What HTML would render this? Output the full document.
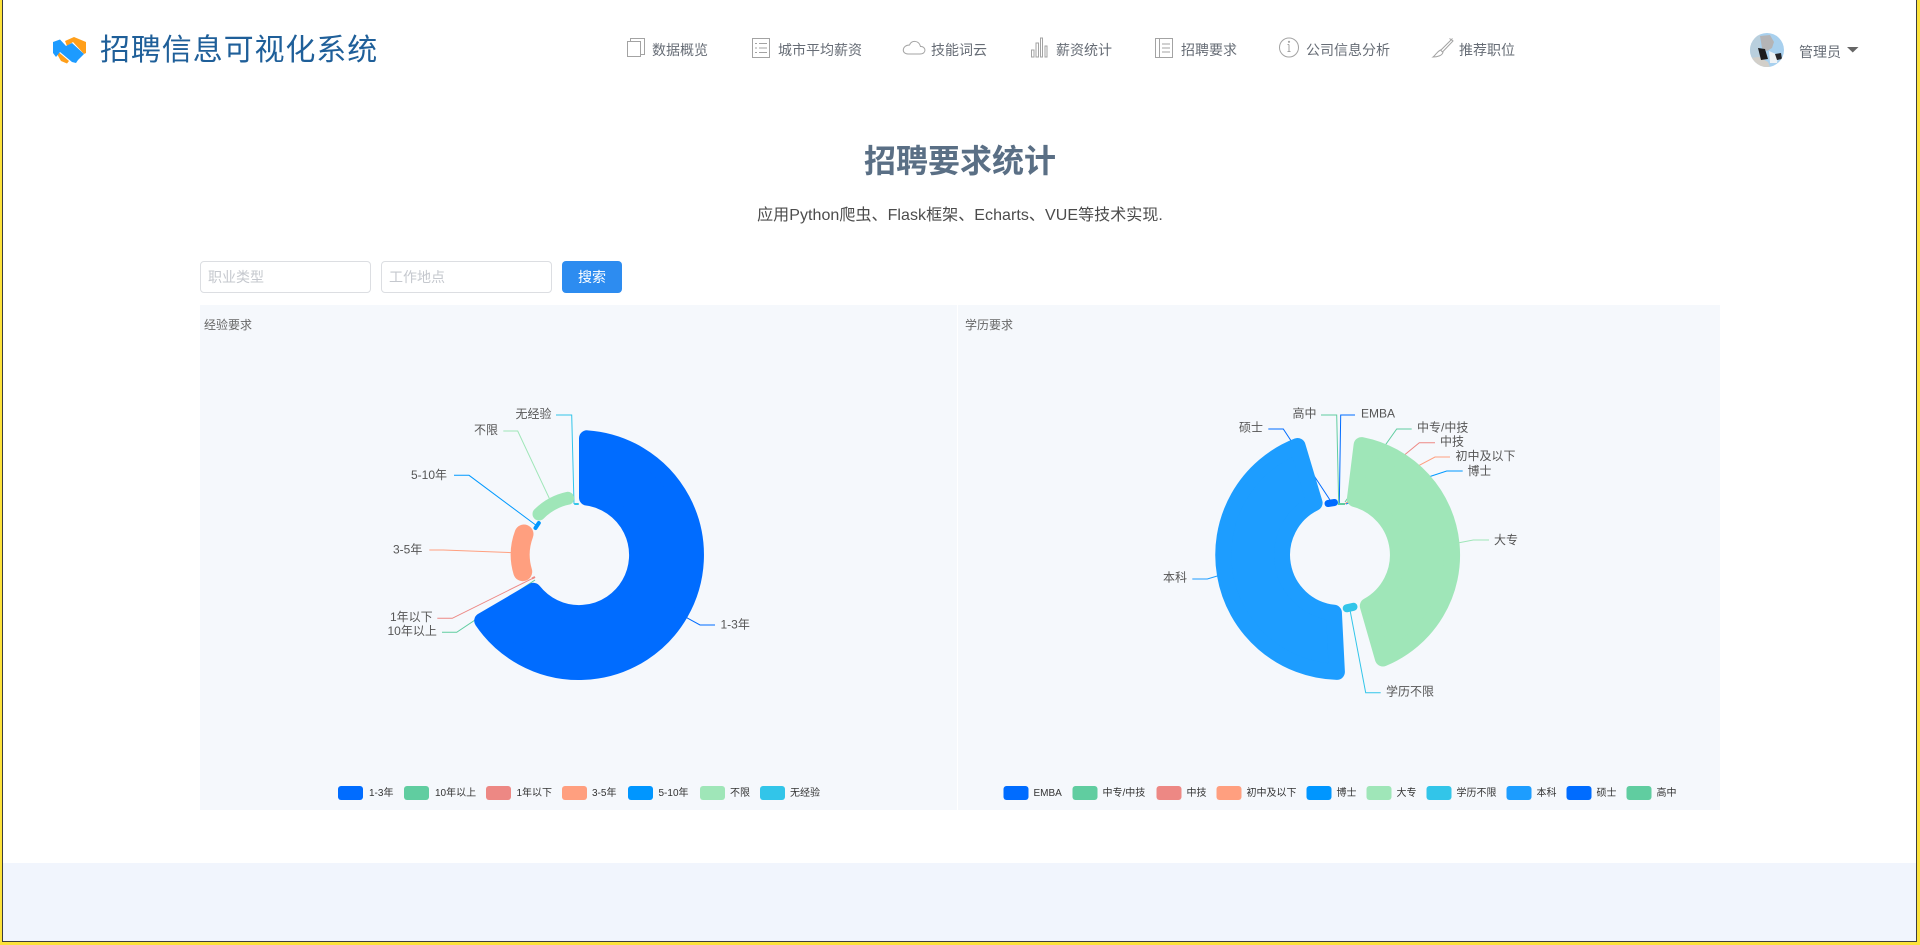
<!DOCTYPE html>
<html lang="zh"><head><meta charset="utf-8"><title>招聘要求统计</title>
<style>
html,body{margin:0;padding:0;background:#fff;width:1920px;height:945px;overflow:hidden}
body{position:relative;font-family:"Liberation Sans","Noto Sans CJK SC",sans-serif;color:#515a6e}
.a{position:absolute;white-space:nowrap}
.nav{font-size:14px;line-height:20px;top:40px;color:#666c75}
.in{box-sizing:border-box;top:261px;width:171px;height:32px;border:1px solid #dcdee2;border-radius:4px;background:#fff;color:#c5c8ce;font-size:14px;line-height:30px;padding-left:7px}
svg{position:absolute;overflow:visible}
svg text{font-family:"Liberation Sans","Noto Sans CJK SC",sans-serif;dominant-baseline:central}
.lb text{font-size:12px;fill:#555}
.lg text{font-size:10px;fill:#333}
.ic{fill:none;stroke:#a3a3a3;stroke-width:1}
</style></head><body>

<div class="a" style="left:0;top:863px;width:1920px;height:82px;background:#f1f5fd"></div>
<div class="a" style="left:200px;top:305px;width:757px;height:505px;background:#f5f8fc"></div>
<div class="a" style="left:958px;top:305px;width:762px;height:505px;background:#f5f8fc"></div>

<!-- logo -->
<svg style="left:0;top:0" width="100" height="70">
<polygon fill="#ff9f1a" points="65,41 74,37 86,42 86,53 84,54 73,42 67,46"/>
<polygon fill="#ff9f1a" points="57,54 59,52.5 69,61 67,63.5 61,61"/>
<polygon fill="#1d9bff" points="53,42 60,39.5 66,46 72,43 84,54 78,60 76,63 72,62 60,52 56,57 53,53"/>
</svg>
<div class="a" style="left:100px;top:30px;font-size:30px;line-height:42px;color:#1f5f99;letter-spacing:.9px">招聘信息可视化系统</div>

<!-- nav icons -->
<svg style="left:0;top:0" width="1920" height="70">
<g class="ic">
<rect x="627.5" y="41.5" width="13" height="15"/><path d="M630.5 41V38.5H644.5V54.5H641"/>
<rect x="752.5" y="38.5" width="17" height="19"/><path d="M755 43.5h2M759 43.5h8M755 48h2M759 48h8M755 52.5h2M759 52.5h8"/>
<path d="M908 54H920C927 54 926 46 920.5 46.5C919 40 911 40 909.5 45C902 45 901 54 908 54Z"/>
<path d="M1031.500 57V50H1034V57ZM1036 57V43H1038.500V57ZM1040.500 57V38H1042.500V57ZM1045 57V46H1047V57Z"/>
<rect x="1155.500" y="38.500" width="17" height="19"/><path d="M1159.500 38.500V57.500M1162 44h8M1162 48h8M1162 52h8"/>
<circle cx="1289" cy="47.500" r="9.500"/><path d="M1289 44.500v7M1287.500 44.500h1.500M1287.500 51.500h3"/><circle cx="1289" cy="41.800" r=".6"/>
<path d="M1452.500 38.500L1440.500 50.500M1449.500 38.500L1453 41L1442.500 52M1440.500 50L1443 52.500C1442 55.500 1437.500 57 1433 57C1436 55 1436.500 52 1440.500 50Z"/>
</g>
<path d="M1847 47H1858.500L1852.750 52.500Z" fill="#666"/>
</svg>

<div class="a nav" style="left:652px">数据概览</div>
<div class="a nav" style="left:778px">城市平均薪资</div>
<div class="a nav" style="left:931px">技能词云</div>
<div class="a nav" style="left:1056px">薪资统计</div>
<div class="a nav" style="left:1181px">招聘要求</div>
<div class="a nav" style="left:1306px">公司信息分析</div>
<div class="a nav" style="left:1459px">推荐职位</div>
<div class="a nav" style="left:1799px;top:42px">管理员</div>

<!-- avatar -->
<svg style="left:1750px;top:33px" width="34" height="34" viewBox="0 0 34 34">
<defs><clipPath id="cp"><circle cx="17" cy="17" r="17"/></clipPath></defs>
<g clip-path="url(#cp)">
<rect width="34" height="34" fill="#a8d0ee"/>
<rect x="0" y="0" width="10" height="26" fill="#b9cfdd"/>
<path d="M10 3L20 2L24 9L22 15L17 18L12 15Z" fill="#b4b4b6"/>
<path d="M0 25L9 24L18 29L20 34H0Z" fill="#d2cfc9"/>
<path d="M19 18L28 22L27 30L20 30Z" fill="#eef2f5"/>
<path d="M8 15L15 16L18 26L11 27Z" fill="#1c1c1e"/>
<path d="M25 21L31 20L32 26L27 27Z" fill="#26262a"/>
</g></svg>

<!-- heading -->
<div class="a" style="left:0;width:1920px;top:139px;text-align:center;font-size:32px;line-height:44px;font-weight:700;color:#5a6f85">招聘要求统计</div>
<div class="a" style="left:0;width:1920px;top:204px;text-align:center;font-size:16px;line-height:24px;color:#4c4c4c;letter-spacing:.06px">应用Python爬虫、Flask框架、Echarts、VUE等技术实现.</div>

<!-- search -->
<div class="a in" style="left:200px">职业类型</div>
<div class="a in" style="left:381px">工作地点</div>
<div class="a" style="left:562px;top:261px;width:60px;height:32px;background:#2d8cf0;border-radius:4px;color:#fff;font-size:14px;line-height:32px;text-align:center">搜索</div>

<div class="a" style="left:204px;top:317px;font-size:12px;line-height:17px;color:#666">经验要求</div>
<div class="a" style="left:965px;top:317px;font-size:12px;line-height:17px;color:#666">学历要求</div>

<!-- charts -->
<svg style="left:0;top:0" width="1920" height="945">
<g fill="none" stroke-width="1">
<!-- chart 1 lines -->
<path stroke="#006cff" d="M686.700 617.700L700 625H715"/>
<path stroke="#32c5e9" d="M556 415H571.700L574 504"/>
<path stroke="#9fe6b8" d="M503.300 431H517.700L549.300 498.300"/>
<path stroke="#0099ff" d="M454 475.300H469L535.700 525"/>
<path stroke="#ff9f7f" d="M429.300 550H443.300L513.300 552.700"/>
<path stroke="#60cda0" d="M442 632.300H456.700L535 580"/>
<path stroke="#ed8884" d="M437.300 618.300H452.300L534 577.700"/>
<!-- chart 2 lines -->
<path stroke="#006cff" d="M1355 415H1340.700L1339.300 504"/>
<path stroke="#60cda0" d="M1321 415H1336.700L1338.700 504"/>
<path stroke="#006cff" d="M1268.300 429H1283.300L1330 500"/>
<path stroke="#60cda0" d="M1411.700 429H1396.700L1345 502"/>
<path stroke="#ed8884" d="M1435 442.700H1419.300L1345 504"/>
<path stroke="#ff9f7f" d="M1450 457H1435L1346 504"/>
<path stroke="#0099ff" d="M1462.700 471H1446.700L1346 504"/>
<path stroke="#9fe6b8" d="M1489 540H1473.300L1459 542.700"/>
<path stroke="#1d9dff" d="M1192.300 579H1207.300L1217.300 576"/>
<path stroke="#32c5e9" d="M1380.700 692.700H1365.700L1350 610"/>
</g>

<!-- chart 1 slices -->
<path fill="#006cff" stroke="#006cff" stroke-width="16" stroke-linejoin="round" d="M587 438.300A117 117 0 1 1 482.200 620.800L533.400 590.800A58 58 0 1 0 587 497.600Z"/>
<path fill="none" stroke="#ff9f7f" stroke-width="19" stroke-linecap="round" d="M524 534A59 59 0 0 0 522.700 571.700"/>
<path fill="none" stroke="#9fe6b8" stroke-width="13" stroke-linecap="round" d="M539 514A57.500 57.500 0 0 1 567.700 498.300"/>
<path fill="none" stroke="#0096ff" stroke-width="4" stroke-linecap="round" d="M535.500 528L538.800 523"/>
<path fill="none" stroke="#32c5e9" stroke-width="2" stroke-linecap="round" d="M575 504H578"/>
<path fill="none" stroke="#ed8884" stroke-width="2" d="M532 578.500L535 577"/>

<!-- chart 2 slices -->
<path fill="#9fe6b8" stroke="#9fe6b8" stroke-width="16" stroke-linejoin="round" d="M1361.600 445.100A112 112 0 0 1 1382.900 658.500L1367.800 605.900A58 58 0 0 0 1354.900 499Z"/>
<path fill="#1d9dff" stroke="#1d9dff" stroke-width="16" stroke-linejoin="round" d="M1297.600 446A117 117 0 0 0 1336.900 671.900L1333.900 612.700A58 58 0 0 1 1314.600 502.900Z"/>
<path fill="none" stroke="#006cff" stroke-width="7" stroke-linecap="round" d="M1328 503.500L1334.500 502.500"/>
<path fill="none" stroke="#32c5e9" stroke-width="8" stroke-linecap="round" d="M1346.700 608.300L1353.500 606.800"/>
<path fill="none" stroke="#60cda0" stroke-width="2" d="M1338 504H1345"/>

<!-- chart labels -->
<g class="lb">
<text x="720.500" y="624.500">1-3年</text>
<text x="515.500" y="414">无经验</text>
<text x="474" y="430">不限</text>
<text x="411" y="475">5-10年</text>
<text x="393" y="549.500">3-5年</text>
<text x="390" y="617">1年以下</text>
<text x="387.500" y="631">10年以上</text>

<text x="1361" y="413.500">EMBA</text>
<text x="1292.500" y="413.500">高中</text>
<text x="1239" y="427.500">硕士</text>
<text x="1417" y="427.500">中专/中技</text>
<text x="1440" y="441.500">中技</text>
<text x="1455.500" y="456">初中及以下</text>
<text x="1467.500" y="471">博士</text>
<text x="1494" y="540">大专</text>
<text x="1163" y="577.500">本科</text>
<text x="1386" y="691.500">学历不限</text>
</g>

<!-- legend 1 -->
<g>
<rect x="338" y="786" width="25" height="14" rx="3" fill="#006cff"/>
<rect x="404" y="786" width="25" height="14" rx="3" fill="#60cda0"/>
<rect x="486" y="786" width="25" height="14" rx="3" fill="#ed8884"/>
<rect x="562" y="786" width="25" height="14" rx="3" fill="#ff9f7f"/>
<rect x="628" y="786" width="25" height="14" rx="3" fill="#0096ff"/>
<rect x="700" y="786" width="25" height="14" rx="3" fill="#9fe6b8"/>
<rect x="760" y="786" width="25" height="14" rx="3" fill="#32c5e9"/>
</g>
<g class="lg">
<text x="369" y="793.500">1-3年</text>
<text x="435" y="793.500">10年以上</text>
<text x="516.500" y="793.500">1年以下</text>
<text x="592" y="793.500">3-5年</text>
<text x="658.500" y="793.500">5-10年</text>
<text x="730" y="793.500">不限</text>
<text x="790" y="793.500">无经验</text>
</g>

<!-- legend 2 -->
<g>
<rect x="1003.500" y="786" width="25" height="14" rx="3" fill="#006cff"/>
<rect x="1072.500" y="786" width="25" height="14" rx="3" fill="#60cda0"/>
<rect x="1156.500" y="786" width="25" height="14" rx="3" fill="#ed8884"/>
<rect x="1216.500" y="786" width="25" height="14" rx="3" fill="#ff9f7f"/>
<rect x="1306.500" y="786" width="25" height="14" rx="3" fill="#0096ff"/>
<rect x="1366.500" y="786" width="25" height="14" rx="3" fill="#9fe6b8"/>
<rect x="1426.500" y="786" width="25" height="14" rx="3" fill="#32c5e9"/>
<rect x="1506.500" y="786" width="25" height="14" rx="3" fill="#1d9dff"/>
<rect x="1566.500" y="786" width="25" height="14" rx="3" fill="#006cff"/>
<rect x="1626.500" y="786" width="25" height="14" rx="3" fill="#60cda0"/>
</g>
<g class="lg">
<text x="1033.500" y="793.500">EMBA</text>
<text x="1102.500" y="793.500">中专/中技</text>
<text x="1186.500" y="793.500">中技</text>
<text x="1246.500" y="793.500">初中及以下</text>
<text x="1336.500" y="793.500">博士</text>
<text x="1396.500" y="793.500">大专</text>
<text x="1456.500" y="793.500">学历不限</text>
<text x="1536.500" y="793.500">本科</text>
<text x="1596.500" y="793.500">硕士</text>
<text x="1656.500" y="793.500">高中</text>
</g>
</svg>

<!-- frame -->
<div class="a" style="left:0;top:0;width:2px;height:945px;background:#fde23a"></div>
<div class="a" style="left:2px;top:0;width:1px;height:942px;background:#3c3c3c"></div>
<div class="a" style="left:1917px;top:0;width:3px;height:945px;background:#fde23a"></div>
<div class="a" style="left:1916px;top:0;width:1px;height:942px;background:#3c3c3c"></div>
<div class="a" style="left:0;top:942px;width:1920px;height:3px;background:#fde23a"></div>
<div class="a" style="left:2px;top:941px;width:1915px;height:1px;background:#3c3c3c"></div>
</body></html>
